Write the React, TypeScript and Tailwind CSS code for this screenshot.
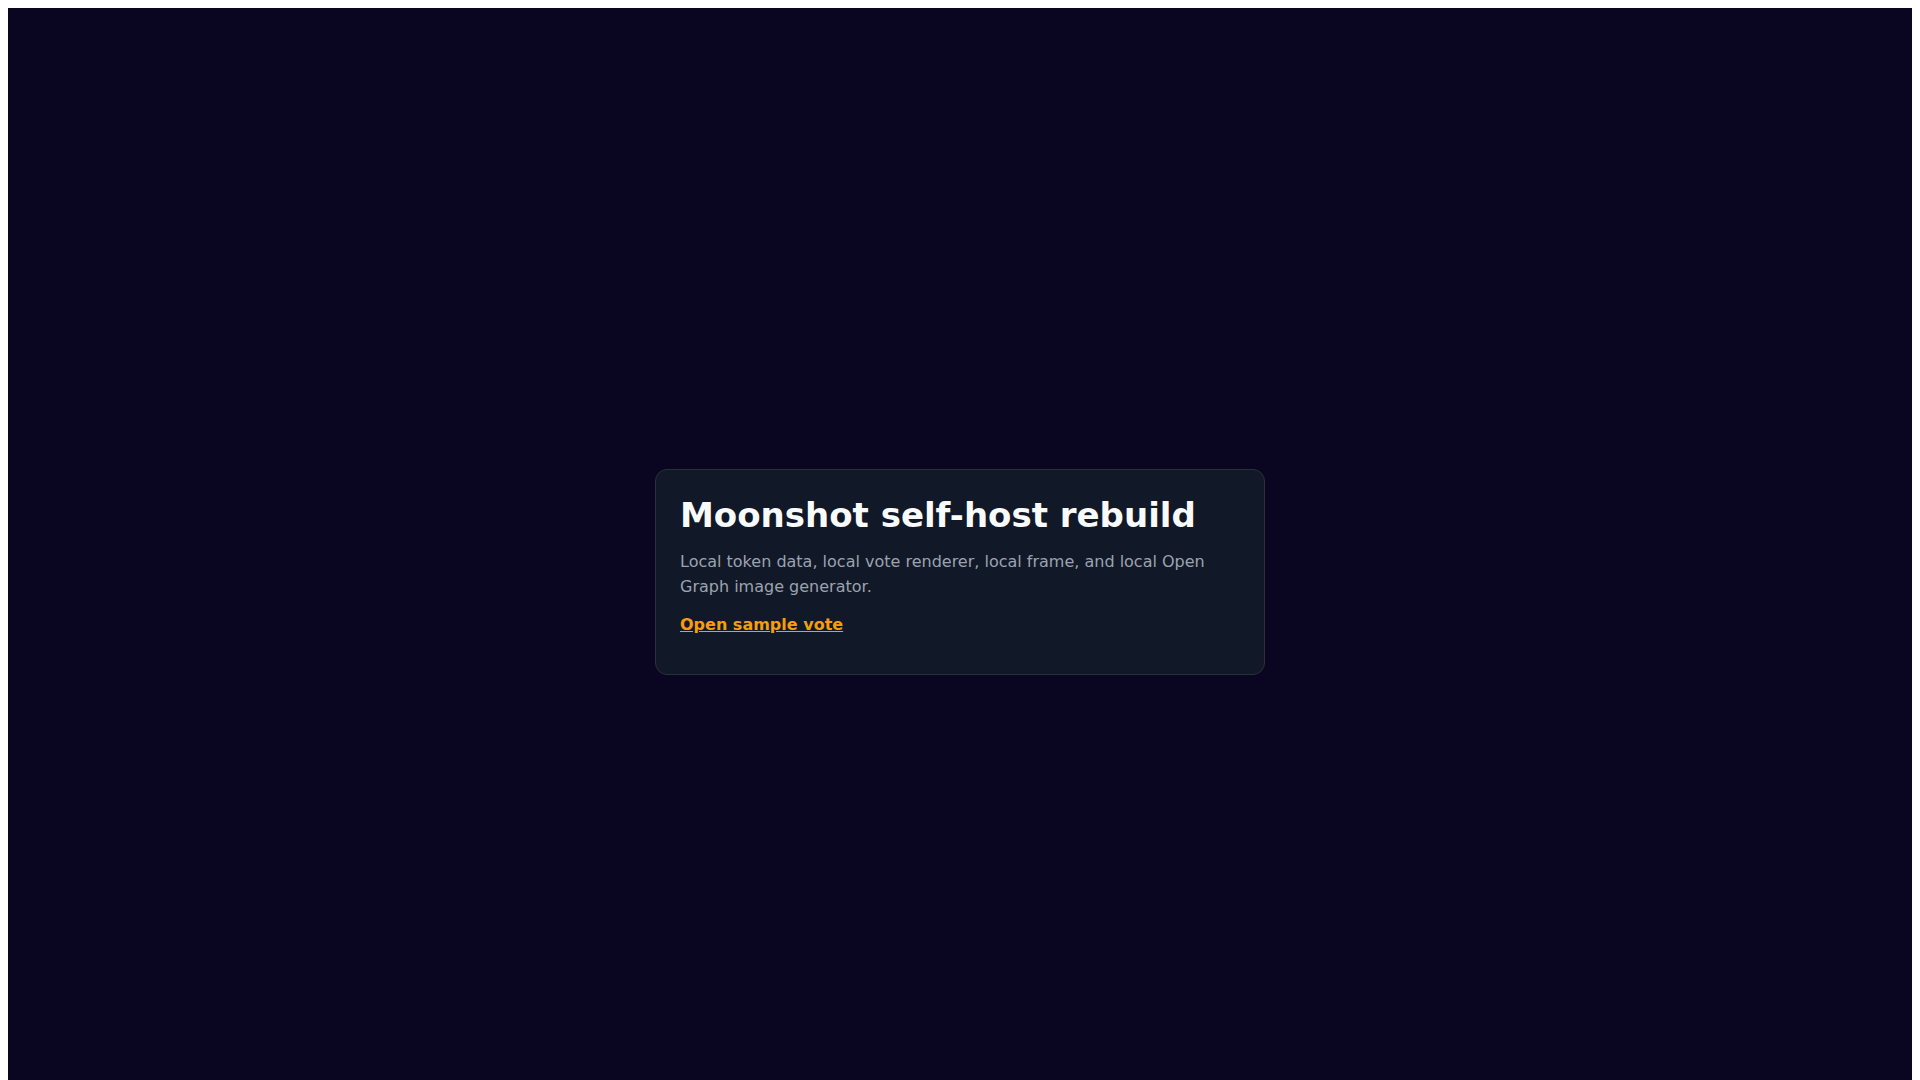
export default function App() {
  return (
    <div className="bg-white p-2 font-['DejaVu_Sans',sans-serif]">
      <main className="box-content flex min-h-screen items-center justify-center bg-[#0a0520] p-6">
        <section className="w-[610px] rounded-xl border border-[#2a2f3d] bg-[#111827] px-6 pt-[25px] pb-[23px]">
          <h1 className="text-[34px] font-bold leading-[1.2] text-[#f9fafb]">
            Moonshot self-host rebuild
          </h1>
          <p className="mt-[14px] text-base leading-[1.55] text-[#9ca3af]">
            Local token data, local vote renderer, local frame, and local Open Graph image
            generator.
          </p>
          <p className="mt-[13px] mb-[13px] text-base leading-[1.55]">
            <a href="#" className="font-bold text-[#f59e0b] underline">
              Open sample vote
            </a>
          </p>
        </section>
      </main>
    </div>
  );
}
